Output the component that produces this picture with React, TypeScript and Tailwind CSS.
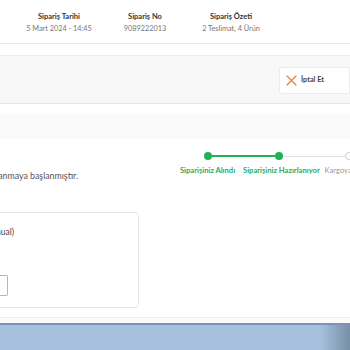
import React from "react";

function XIcon() {
  return (
    <svg width="11" height="11" viewBox="0 0 11 11">
      <path d="M1 1 L10 10 M10 1 L1 10" stroke="#f07a3a" strokeWidth="1.2" strokeLinecap="round" />
    </svg>
  );
}

export default function App() {
  return (
    <div
      className="w-[350px] h-[350px] overflow-hidden bg-white flex flex-col"
      style={{ fontFamily: "Lato, 'Liberation Sans', sans-serif" }}
    >
      {/* header summary */}
      <div className="h-[44px] shrink-0 border-b border-[#e8e8e8] flex items-center pl-[16px]">
        {[
          ["Sipariş Tarihi", "5 Mart 2024 - 14:45"],
          ["Sipariş No", "9089222013"],
          ["Sipariş Özeti", "2 Teslimat, 4 Ürün"],
        ].map(([t, v]) => (
          <div key={t} className="w-[86px] flex flex-col items-center gap-[3px] pt-[1px]">
            <div className="text-[7.5px] font-bold text-[#333] leading-[9px]">{t}</div>
            <div className="text-[7.3px] text-[#777] leading-[9px]">{v}</div>
          </div>
        ))}
      </div>
      <div className="h-[12px] shrink-0 border-b border-[#ececec]" />
      {/* gray action bar */}
      <div className="h-[48px] shrink-0 bg-[#f8f8f8] border-b border-[#e6e6e6] flex items-center justify-end">
        <div className="w-[71px] h-[27px] bg-white border border-[#ececec] rounded-l-[2px] flex items-center gap-[4px] pl-[6px] mt-[1px]">
          <XIcon />
          <span className="text-[7.3px] font-bold text-[#444]">İptal Et</span>
        </div>
      </div>
      <div className="h-[10px] shrink-0" />
      <div className="h-[25px] shrink-0 bg-[#fafafa]" />
      {/* status area */}
      <div className="h-[73px] shrink-0 flex">
        <div className="w-[78px] shrink-0 flex justify-end overflow-hidden pt-[30px]">
          <span className="whitespace-nowrap text-[8.8px] text-[#555]">Siparişiniz hazırlanmaya başlanmıştır.</span>
        </div>
        <div className="flex-1 overflow-hidden flex flex-col pt-[13px]">
          <div className="flex items-center h-[8px] pl-[126px]">
            <div className="w-[8px] h-[8px] rounded-full bg-[#1fb155] shrink-0" />
            <div className="w-[63px] h-[2px] bg-[#1fb155] shrink-0" />
            <div className="w-[8px] h-[8px] rounded-full bg-[#1fb155] shrink-0" />
            <div className="w-[62px] h-[1px] bg-[#e0e0e0] shrink-0" />
            <div className="w-[8px] h-[8px] rounded-full border border-[#d0d0d0] bg-white shrink-0" />
          </div>
          <div className="flex mt-[6px] whitespace-nowrap text-[7.6px] font-bold leading-[9px] pl-[94px]">
            <span className="text-[#2aac5a] w-[71px] shrink-0 text-center">Siparişiniz Alındı</span>
            <span className="text-[#2aac5a] w-[71px] shrink-0 text-center">Siparişiniz Hazırlanıyor</span>
            <span className="text-[#999] font-normal w-[71px] shrink-0 text-center">Kargoya Verildi</span>
          </div>
        </div>
      </div>
      {/* card */}
      <div className="h-[96px] shrink-0 flex">
        <div className="w-[143px] shrink-0 border border-[#e6e6e6] rounded-[4px] -ml-[4px] flex flex-col overflow-hidden">
          <div className="w-[17px] overflow-hidden flex justify-end pt-[13px]">
            <span className="whitespace-nowrap text-[8.5px] text-[#444]">(Manual)</span>
          </div>
          <div className="w-full flex pt-[36px]">
            <div className="w-[11px] h-[21px] bg-[#f2a46e] p-[1px] rounded-r-[2px] flex">
              <div className="flex-1 bg-white rounded-r-[1px]" />
            </div>
          </div>
        </div>
      </div>
      <div className="h-[10px] shrink-0 border-b border-[#eeeeee]" />
      <div className="h-[5px] shrink-0 bg-[#fcfafa]" />
      {/* blue bar */}
      <div className="flex-1 border-t-[2px] border-[#7d93b3] bg-[#a7c0dd] flex justify-end">
        <div className="w-[30px] h-full bg-gradient-to-r from-[#a7c0dd] to-[#7890a8]" />
      </div>
    </div>
  );
}
